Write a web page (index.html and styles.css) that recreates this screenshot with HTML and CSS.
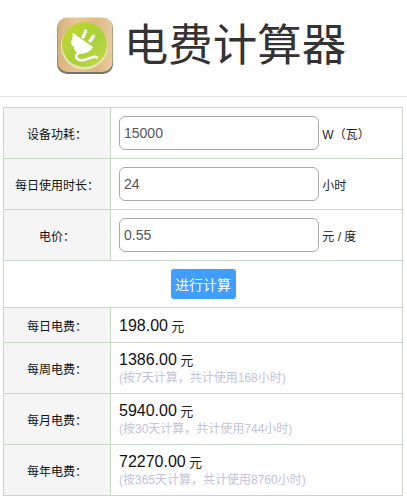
FILE: index.html
```html
<!DOCTYPE html>
<html lang="zh-CN">

<head>

  <meta charset="utf-8">

  <title>电费计算器</title>

  <link rel="stylesheet" href="styles.css">
</head>

<body>

  <header class="header">
    <svg class="logo" width="58" height="58" viewBox="0 0 58 58">
      <defs>
        <linearGradient id="wood" x1="0" y1="0" x2="1" y2="0">
          <stop offset="0" stop-color="#d6b07c"></stop>
          <stop offset="0.35" stop-color="#e6c896"></stop>
          <stop offset="0.7" stop-color="#dcb884"></stop>
          <stop offset="1" stop-color="#e8cc9c"></stop>
        </linearGradient>
        <linearGradient id="green" x1="0" y1="0" x2="1" y2="1">
          <stop offset="0" stop-color="#c6d92c"></stop>
          <stop offset="0.55" stop-color="#a9d03a"></stop>
          <stop offset="1" stop-color="#c4d94a"></stop>
        </linearGradient>
      </defs>
      <rect x="1" y="1" width="56" height="56" rx="10" fill="#77726a"></rect>
      <rect x="1.500" y="0.500" width="55" height="54.500" rx="10" fill="url(#wood)"></rect>
      <circle cx="28.500" cy="29" r="23.500" fill="#e6e6b0"></circle>
      <circle cx="28.500" cy="27.500" r="22.500" fill="url(#green)"></circle>
      <path d="M29 12 L31.500 13.500 L28 22 L25 20.500 Z M37 17 L39.500 19 L35 26 L32 24 Z" fill="#fff"></path>
      <path d="M17 16 C21 19 30 25 37 30 C35 34 30 37 24 37 C20 36 18 33 18 30 C15 28 14 25 16 23 C17 21 16 18 17 16 Z" fill="#fff"></path>
      <path d="M23 36 C19 38 19 42 24 43 C29 44 33 41 37 40 C38.500 39.500 40 40 41 40.500" fill="none" stroke="#fff" stroke-width="2.500" stroke-linecap="round"></path>
    </svg>
    <h1 class="title">电费计算器</h1>
  </header>

  <table class="calc">
    <tr class="row-input">
      <th>设备功耗：</th>
      <td><input class="field" type="text" value="15000"> <span class="unit">W（瓦）</span></td>
    </tr>
    <tr class="row-input">
      <th>每日使用时长：</th>
      <td><input class="field" type="text" value="24"> <span class="unit">小时</span></td>
    </tr>
    <tr class="row-input">
      <th>电价：</th>
      <td><input class="field" type="text" value="0.55"> <span class="unit">元 / 度</span></td>
    </tr>
    <tr>
      <td class="action" colspan="2"><button class="btn" type="button">进行计算</button></td>
    </tr>
    <tr class="row-day">
      <th>每日电费：</th>
      <td><span class="money">198.00</span> <span class="yuan">元</span></td>
    </tr>
    <tr class="row-result">
      <th>每周电费：</th>
      <td>
        <div class="line"><span class="money">1386.00</span> <span class="yuan">元</span></div>
        <div class="note">(按7天计算，共计使用168小时)</div>
      </td>
    </tr>
    <tr class="row-result">
      <th>每月电费：</th>
      <td>
        <div class="line"><span class="money">5940.00</span> <span class="yuan">元</span></div>
        <div class="note">(按30天计算，共计使用744小时)</div>
      </td>
    </tr>
    <tr class="row-result">
      <th>每年电费：</th>
      <td>
        <div class="line"><span class="money">72270.00</span> <span class="yuan">元</span></div>
        <div class="note">(按365天计算，共计使用8760小时)</div>
      </td>
    </tr>
  </table>

</body>

</html>
```

FILE: styles.css
```css
body {
  margin: 0;
  font-family: "Liberation Sans", "Noto Sans CJK SC", sans-serif;
  color: #333;
  background: #fff;
}

.header {
  display: flex;
  justify-content: center;
  align-items: center;
  gap: 10px;
  height: 96px;
  padding-right: 5px;
  border-bottom: 1px solid #ddd;
}

.logo {
  flex: none;
  margin-top: -4px;
}

.title {
  margin: -4px 0 0;
  font-size: 44.500px;
  font-weight: normal;
  line-height: 1;
}

.calc {
  width: 400px;
  margin: 10px 0 0 3px;
  border-collapse: collapse;
  table-layout: fixed;
  font-size: 12px;
}

.calc th,
.calc td {
  border: 1px solid #c8d8c8;
  padding: 0;
}

.calc th {
  width: 106px;
  background: #f5f5f5;
  font-weight: normal;
  text-align: center;
  color: #111;
}

.calc td {
  padding-left: 8px;
}

.row-input th,
.row-input td {
  height: 50px;
}

.row-day th,
.row-day td {
  height: 34px;
}

.row-result th,
.row-result td {
  height: 50px;
}

.field {
  width: 200px;
  height: 34px;
  box-sizing: border-box;
  padding: 0 4px;
  border: 1px solid #aaa;
  border-radius: 6px;
  font: 14px "Liberation Sans", sans-serif;
  color: #555;
  vertical-align: middle;
}

.unit {
  vertical-align: middle;
  color: #222;
}

.calc .action {
  height: 46px;
  padding: 0;
  text-align: center;
}

.btn {
  width: 65px;
  height: 30px;
  padding: 0;
  border: 0;
  border-radius: 3px;
  background: #409eff;
  color: #fff;
  font: 14px "Liberation Sans", "Noto Sans CJK SC", sans-serif;
  vertical-align: middle;
}

.money {
  font-size: 16px;
  color: #111;
}

.yuan {
  font-size: 13px;
  color: #222;
}

.line {
  line-height: 19px;
}

.note {
  font-size: 12px;
  line-height: 15px;
  color: #c2c2d8;
}
```
